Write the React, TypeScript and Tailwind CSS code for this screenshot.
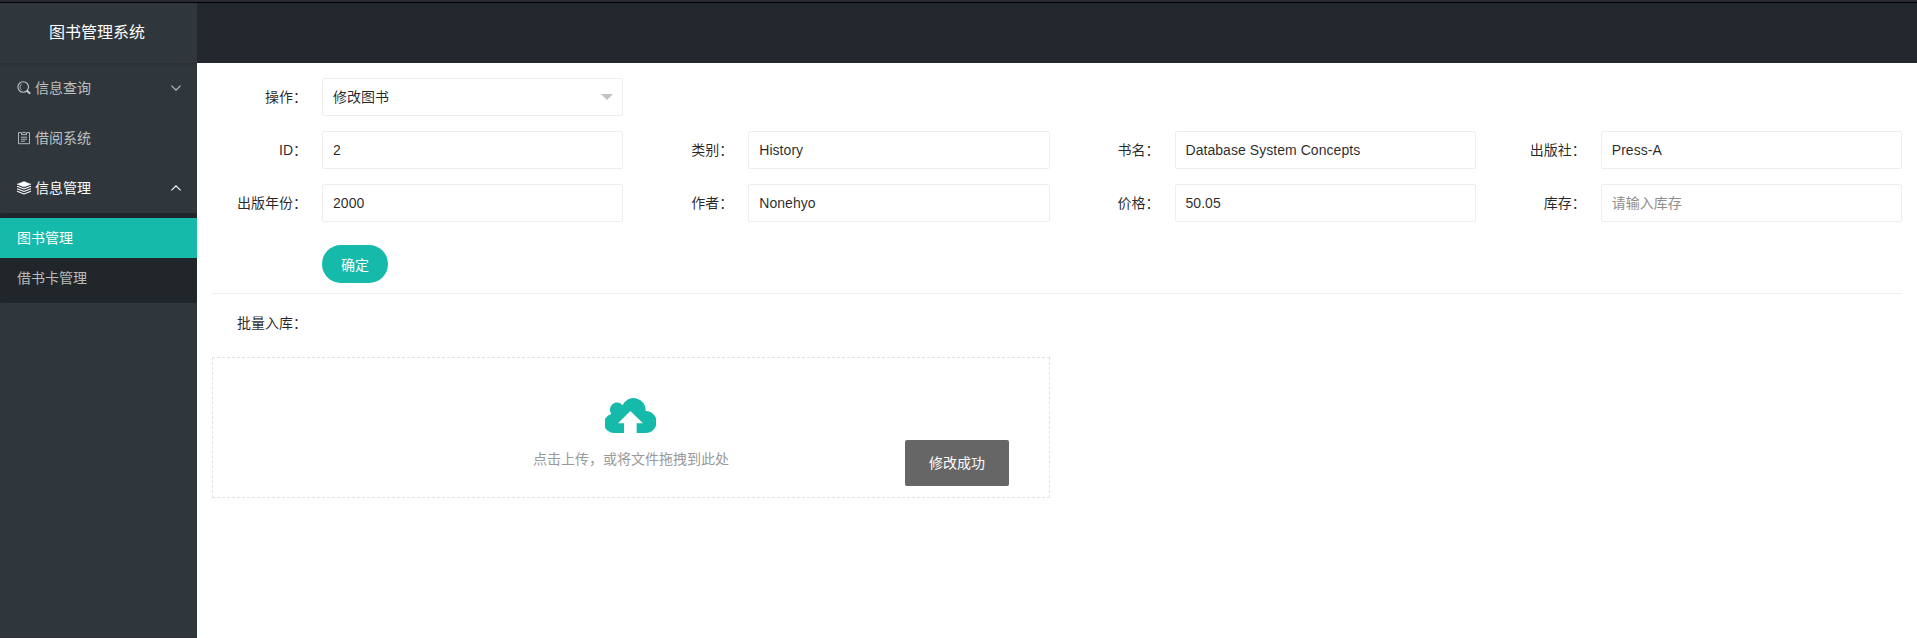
import type { ReactNode } from "react";

function SearchIcon() {
  return (
    <svg className="h-[14px] w-[14px] shrink-0" viewBox="0 0 14 14" fill="none" stroke="currentColor">
      <circle cx="6.2" cy="6" r="5.3" strokeWidth="1.1" />
      <path d="M4.8 3A3.4 3.4 0 0 0 4.6 8.8" strokeWidth="0.8" />
      <path d="M10 9.7L13.2 12.8" strokeWidth="2" />
    </svg>
  );
}

function FormIcon() {
  return (
    <svg className="h-[14px] w-[14px] shrink-0" viewBox="0 0 14 14" fill="none" stroke="currentColor" strokeWidth="0.9">
      <path d="M4 1.5H1.5V12.7H12.5V1.5H10" />
      <path d="M4.5 3.6V1.8H6Q7 0 8 1.8H9.5V3.6Z" />
      <path d="M4 6.2H10M4 8.2H10M4 10.2H8" />
    </svg>
  );
}

function LayersIcon() {
  return (
    <svg className="h-[14px] w-[16px] shrink-0" viewBox="0 0 16 14" fill="none" stroke="currentColor">
      <path d="M8 0.4L15 3.2L8 6L1 3.2Z" fill="currentColor" strokeWidth="0.4" />
      <path d="M1 5.2L8 8L15 5.2M1 7.7L8 10.5L15 7.7M1 10.2L8 13L15 10.2" strokeWidth="1.1" />
    </svg>
  );
}

function Chevron({ up = false }: { up?: boolean }) {
  return (
    <svg className="ml-auto h-[6px] w-[10px]" viewBox="0 0 10 6" fill="none" stroke="currentColor" strokeWidth="1.1">
      <path d={up ? "M0.4 5.3L5 0.8L9.6 5.3" : "M0.4 0.7L5 5.2L9.6 0.7"} />
    </svg>
  );
}

function CloudIcon() {
  return (
    <svg className="mr-[2px] h-[35px] w-[51px]" viewBox="315 53 153 105" fill="#16baaa">
      <path d="M343 158A29 29 0 0 1 334 101A21 21 0 0 1 368 75A36 36 0 0 1 437 92A32 32 0 0 1 437 158H410V129H429L391 92L354 129H372V158Z" />
    </svg>
  );
}

function Field({ label, children }: { label: string; children: ReactNode }) {
  return (
    <div className="flex h-[38px]">
      <div className="w-[110px] shrink-0 pr-[15px] text-right leading-[38px]">{label}</div>
      <div className="flex min-w-0 flex-1 items-center rounded-[2px] border border-[#eeeeee] pr-[9px] pl-[10px]">{children}</div>
    </div>
  );
}

const fields = [
  { label: "ID：", value: "2" },
  { label: "类别：", value: "History" },
  { label: "书名：", value: "Database System Concepts" },
  { label: "出版社：", value: "Press-A" },
  { label: "出版年份：", value: "2000" },
  { label: "作者：", value: "Nonehyo" },
  { label: "价格：", value: "50.05" },
  { label: "库存：", value: "" },
];

export default function App() {
  return (
    <div className="relative flex h-[638px] w-full flex-col overflow-hidden bg-white font-['Liberation_Sans','Noto_Sans_CJK_SC',sans-serif] text-[14px] text-black/85">
      <div className="h-[3px] shrink-0 border-b border-black bg-[#2b2a33]" />
      <div className="flex min-h-0 flex-1">
        <aside className="flex w-[197px] shrink-0 flex-col border-b border-[#2f2f35] bg-[#2f363c] text-white/70">
          <div className="h-[60px] pr-[3px] text-center text-[16px] leading-[60px] text-white shadow-[0_1px_2px_0_rgba(0,0,0,0.15)]">图书管理系统</div>
          <div className="flex h-[50px] items-center gap-1 pr-[16px] pl-[17px]">
            <SearchIcon />
            <span>信息查询</span>
            <Chevron />
          </div>
          <div className="flex h-[50px] items-center gap-1 pl-[17px]">
            <FormIcon />
            <span>借阅系统</span>
          </div>
          <div className="flex h-[50px] items-center gap-[3px] pr-[16px] pl-[16px] text-white">
            <LayersIcon />
            <span>信息管理</span>
            <Chevron up />
          </div>
          <div className="rounded-[2px] bg-[#21262a] py-[5px] leading-[40px]">
            <div className="h-10 bg-[#16baaa] pl-[17px] text-white">图书管理</div>
            <div className="h-10 pl-[17px]">借书卡管理</div>
          </div>
        </aside>
        <div className="flex min-w-0 flex-1 flex-col">
          <header className="h-[60px] shrink-0 bg-[#23272e]" />
          <main className="flex flex-col p-[15px]">
            <div className="grid grid-cols-4 gap-[15px]">
              <Field label="操作：">
                <span>修改图书</span>
                <svg className="ml-auto h-[6px] w-[12px]" viewBox="0 0 12 6" fill="#c2c2c2">
                  <path d="M0 0H12L6 6Z" />
                </svg>
              </Field>
            </div>
            <div className="mt-[15px] grid grid-cols-4 gap-[15px]">
              {fields.map((f) => (
                <Field key={f.label} label={f.label}>
                  {f.value ? <span className="tracking-[0.05px]">{f.value}</span> : <span className="text-[#8e8e8e]">请输入库存</span>}
                </Field>
              ))}
            </div>
            <button className="mt-[23px] ml-[110px] h-[38px] w-[66px] rounded-full bg-[#16baaa] pt-px leading-[38px] text-white">确定</button>
            <div className="mt-[10px] border-t border-[#eeeeee]" />
            <div className="mt-[10px] w-[110px] pr-[15px] text-right leading-[38px]">批量入库：</div>
            <div className="mt-[15px] flex h-[141px] w-[838px] flex-col items-center border border-dashed border-[#e2e2e2] pt-[40px] text-[#999999]">
              <CloudIcon />
              <p className="mt-[14px] leading-[24px]">点击上传，或将文件拖拽到此处</p>
            </div>
          </main>
        </div>
      </div>
      <div className="absolute top-[440px] left-[905px] h-[46px] w-[104px] rounded-[2px] bg-[#666666] text-center leading-[46px] text-white">修改成功</div>
    </div>
  );
}
